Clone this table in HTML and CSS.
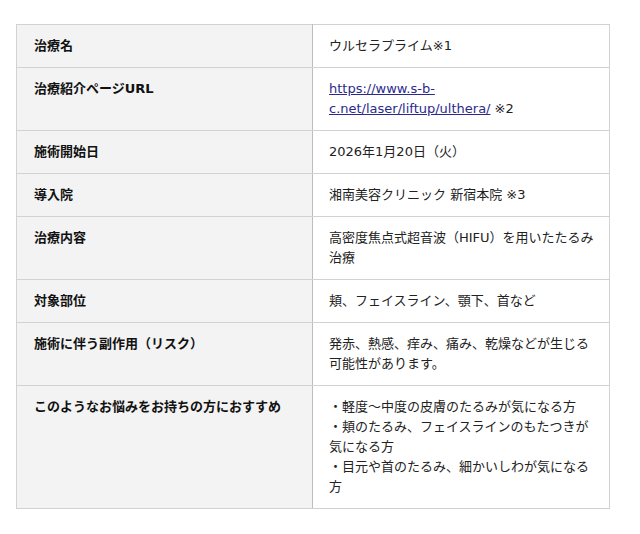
FILE: index.html
```html
<!DOCTYPE html>
<html lang="ja">
<head>
<meta charset="utf-8">
<link rel="stylesheet" href="styles.css">
</head>
<body>
<table class="spec">
<tr><th>治療名</th><td>ウルセラプライム※1</td></tr>
<tr><th>治療紹介ページURL</th><td><a href="#">https://www.s-b-c.net/laser/liftup/ulthera/</a> ※2</td></tr>
<tr><th>施術開始日</th><td>2026年1月20日（火）</td></tr>
<tr><th>導入院</th><td>湘南美容クリニック 新宿本院 ※3</td></tr>
<tr><th>治療内容</th><td>高密度焦点式超音波（HIFU）を用いたたるみ治療</td></tr>
<tr><th>対象部位</th><td>頬、フェイスライン、顎下、首など</td></tr>
<tr><th>施術に伴う副作用（リスク）</th><td>発赤、熱感、痒み、痛み、乾燥などが生じる可能性があります。</td></tr>
<tr><th>このようなお悩みをお持ちの方におすすめ</th><td>・軽度～中度の皮膚のたるみが気になる方<br>・頬のたるみ、フェイスラインのもたつきが気になる方<br>・目元や首のたるみ、細かいしわが気になる方</td></tr>
</table>
</body>
</html>
```
FILE: styles.css
```css
body {
  margin: 0;
  padding: 24px 31px 0 16px;
  background: #fff;
  font-family: "DejaVu Sans", "Noto Sans CJK JP", sans-serif;
  font-size: 13px;
  line-height: 20px;
  color: #222;
}
.spec {
  width: 594px;
  border-collapse: collapse;
  table-layout: fixed;
}
.spec th, .spec td {
  border: 1px solid #d2d2d2;
  padding: 11px 16px 11px 17px;
  vertical-align: top;
  text-align: left;
}
.spec th {
  width: 262px;
  background: #f3f3f3;
  font-weight: bold;
  color: #111;
  border-right-color: #bdbdbd;
}
.spec td {
  background: #fff;
  padding-left: 16px;
  padding-right: 14px;
}
.spec a {
  color: #2b2a8c;
  text-decoration: underline;
}
```
